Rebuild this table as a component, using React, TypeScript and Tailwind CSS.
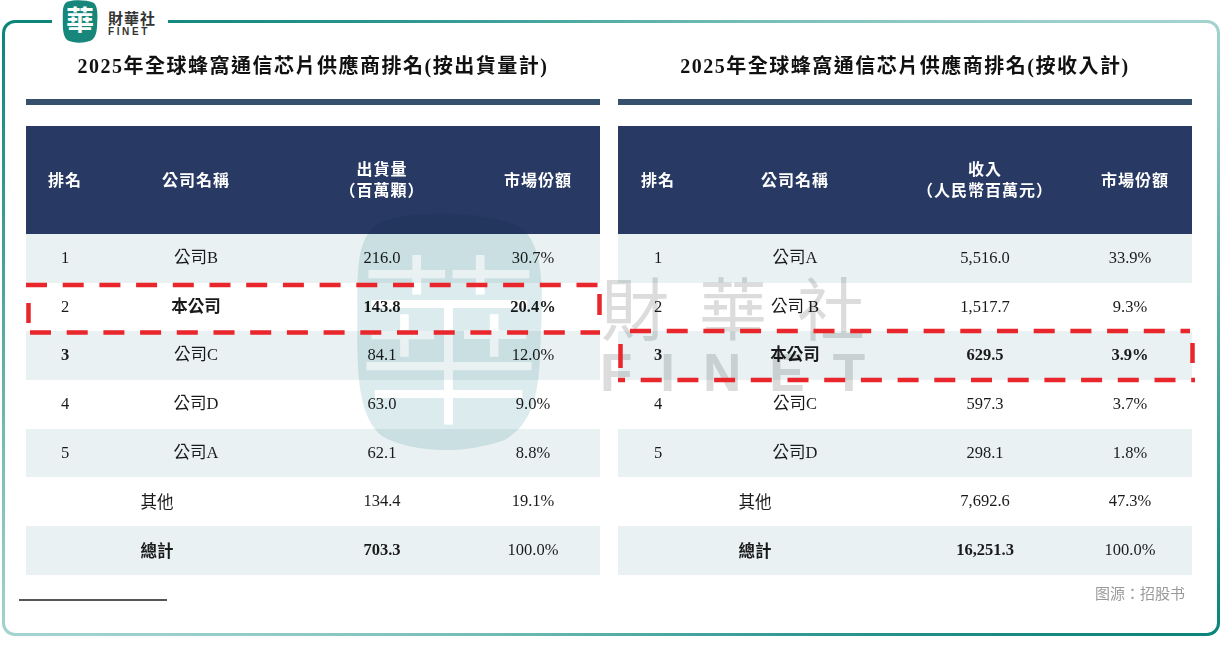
import React from "react";

const serif = "font-['Liberation_Serif','Noto_Sans_CJK_TC',serif]";
const sans = "font-['Noto_Sans_CJK_TC','Noto_Sans',sans-serif]";

interface Row {
  rank?: string;
  name: string;
  value: string;
  share: string;
  rankBold?: boolean;
  bold?: boolean;
  shareBold?: boolean;
}

interface TableProps {
  title: string;
  cols: string;
  valueHead: [string, string];
  rows: Row[];
}

const leftRows: Row[] = [
  { rank: "1", name: "公司B", value: "216.0", share: "30.7%" },
  { rank: "2", name: "本公司", value: "143.8", share: "20.4%", bold: true, shareBold: true },
  { rank: "3", name: "公司C", value: "84.1", share: "12.0%", rankBold: true },
  { rank: "4", name: "公司D", value: "63.0", share: "9.0%" },
  { rank: "5", name: "公司A", value: "62.1", share: "8.8%" },
  { name: "其他", value: "134.4", share: "19.1%" },
  { name: "總計", value: "703.3", share: "100.0%", bold: true },
];

const rightRows: Row[] = [
  { rank: "1", name: "公司A", value: "5,516.0", share: "33.9%" },
  { rank: "2", name: "公司 B", value: "1,517.7", share: "9.3%" },
  { rank: "3", name: "本公司", value: "629.5", share: "3.9%", rankBold: true, bold: true, shareBold: true },
  { rank: "4", name: "公司C", value: "597.3", share: "3.7%" },
  { rank: "5", name: "公司D", value: "298.1", share: "1.8%" },
  { name: "其他", value: "7,692.6", share: "47.3%" },
  { name: "總計", value: "16,251.3", share: "100.0%", bold: true },
];

function RankTable({ title, cols, valueHead, rows }: TableProps) {
  return (
    <div className="w-[574px]">
      <div className={`h-[28px] text-center text-[20px] leading-[28px] font-bold tracking-[1.5px] text-[#111] ${serif}`}>
        {title}
      </div>
      <div className="mt-[19px] h-[6px] bg-[#34506c]" />
      <div
        className={`mt-[21px] grid h-[108px] items-center bg-[#283a63] text-center text-[16px] leading-[21px] font-bold tracking-[1px] text-white ${serif}`}
        style={{ gridTemplateColumns: cols }}
      >
        <div>排名</div>
        <div>公司名稱</div>
        <div>
          <div>{valueHead[0]}</div>
          <div>{valueHead[1]}</div>
        </div>
        <div>市場份額</div>
      </div>
      {rows.map((row, i) => (
        <div
          key={row.name}
          className={`grid h-[48.7px] items-center text-center text-[16.5px] text-[#1a1a1a] ${serif} ${
            i % 2 === 0 ? "bg-[#e9f1f3]" : "bg-white"
          }`}
          style={{ gridTemplateColumns: cols }}
        >
          {row.rank ? (
            <>
              <div className={row.rankBold ? "font-bold" : ""}>{row.rank}</div>
              <div className={row.bold ? "font-bold" : ""}>{row.name}</div>
            </>
          ) : (
            <div className={`col-span-2 pt-[4px] ${row.bold ? "font-bold" : ""}`}>{row.name}</div>
          )}
          <div className={row.bold ? "font-bold" : ""}>{row.value}</div>
          <div className={`pr-[10px] ${row.shareBold ? "font-bold" : ""}`}>{row.share}</div>
        </div>
      ))}
    </div>
  );
}

function Blob({ className, fill }: { className: string; fill: string }) {
  return (
    <svg viewBox="0 0 36 43" className={className} preserveAspectRatio="none">
      <path
        d="M6 1.5C13 -0.5 25 0 31 2.5C35.5 5 35.8 13 35.2 22C35 31 34.5 37.5 28.5 40.8C21 43.5 11 43.2 5.5 40.2C0.5 36.5 0.8 27 0.8 19C0.8 10 0.5 3.5 6 1.5Z"
        fill={fill}
      />
    </svg>
  );
}

function DashedBoxes() {
  const red = "#e8262b";
  return (
    <svg className="pointer-events-none absolute top-0 left-0" width="1221" height="658">
      <g stroke={red} strokeWidth="4.5" fill="none">
        <line x1="26" y1="285" x2="600" y2="285" strokeDasharray="21 15.7" />
        <line x1="30" y1="332.5" x2="600" y2="332.5" strokeDasharray="21 15.7" />
        <line x1="28.5" y1="303" x2="28.5" y2="323" />
        <line x1="599.5" y1="294" x2="599.5" y2="315" />
        <line x1="630" y1="331" x2="1190" y2="331" strokeDasharray="21 15.7" />
        <line x1="618" y1="380" x2="1195" y2="380" strokeDasharray="21 15.7" strokeDashoffset="14" />
        <line x1="620.5" y1="344" x2="620.5" y2="368" />
        <line x1="1192.5" y1="343" x2="1192.5" y2="363" />
      </g>
    </svg>
  );
}

export default function App() {
  const leftCols = "78px 184px 188px 124px";
  const rightCols = "80px 194px 186px 114px";
  return (
    <div className="relative h-[658px] w-[1221px] overflow-hidden bg-white">
      <div className="mt-[20px] ml-[2px] h-[616px] w-[1218px] rounded-[13px] bg-[conic-gradient(#56aea8_0deg,#a3d3cf_63deg,#0b8479_117deg,#56aea8_180deg,#a3d3cf_243deg,#0b8479_297deg,#56aea8_360deg)] p-[3px]">
        <div className="h-full w-full rounded-[10px] bg-white pt-[29px] pr-[25px] pl-[21px]">
          <div className="flex gap-[18px]">
            <RankTable
              title="2025年全球蜂窩通信芯片供應商排名(按出貨量計)"
              cols={leftCols}
              valueHead={["出貨量", "（百萬顆）"]}
              rows={leftRows}
            />
            <RankTable
              title="2025年全球蜂窩通信芯片供應商排名(按收入計)"
              cols={rightCols}
              valueHead={["收入", "（人民幣百萬元）"]}
              rows={rightRows}
            />
          </div>
          <div className="mt-[9px] flex items-start justify-between">
            <div className="mt-[15px] -ml-[7px] h-[2px] w-[148px] bg-[#555]" />
            <div className={`mr-[7px] text-[15px] leading-[18px] text-[#9a9a9a] ${sans}`}>图源：招股书</div>
          </div>
        </div>
      </div>

      {/* watermark, multiplied so table text stays dark */}
      <div className="pointer-events-none absolute top-[212px] left-[353px] isolate h-[240px] w-[192px] mix-blend-multiply">
        <Blob className="absolute inset-0 h-full w-full" fill="#dcecee" />
        <div
          className={`absolute inset-0 flex items-center justify-center pb-[6px] text-[185px] leading-none font-light text-white ${sans}`}
        >
          華
        </div>
      </div>
      <div
        className={`pointer-events-none absolute top-[272px] left-[601px] text-[68px] leading-none tracking-[30px] text-[#dcdcdc] mix-blend-multiply ${sans}`}
      >
        財華社
      </div>
      <div className="pointer-events-none absolute top-[346px] left-[600px] font-['Liberation_Sans',sans-serif] text-[53px] leading-none font-bold tracking-[28px] text-[#dcdcdc] mix-blend-multiply">
        FINET
      </div>

      <DashedBoxes />

      {/* logo */}
      <div className="absolute top-0 left-[52px] flex h-[44px] w-[116px] bg-white">
        <div className="relative ml-[10px] h-[43px] w-[36px]">
          <Blob className="absolute inset-0 h-full w-full" fill="#16877a" />
          <div className={`absolute inset-0 flex items-center justify-center text-[28px] leading-none font-bold text-white ${serif}`}>
            華
          </div>
        </div>
        <div className="mt-[10px] ml-[10px] flex flex-col">
          <div className={`text-[15px] leading-[15px] font-bold tracking-[1px] text-[#333] ${sans}`}>財華社</div>
          <div className="mt-[2px] font-['Liberation_Sans',sans-serif] text-[10px] leading-[10px] font-bold tracking-[2.6px] text-[#333]">
            FINET
          </div>
        </div>
      </div>
    </div>
  );
}
